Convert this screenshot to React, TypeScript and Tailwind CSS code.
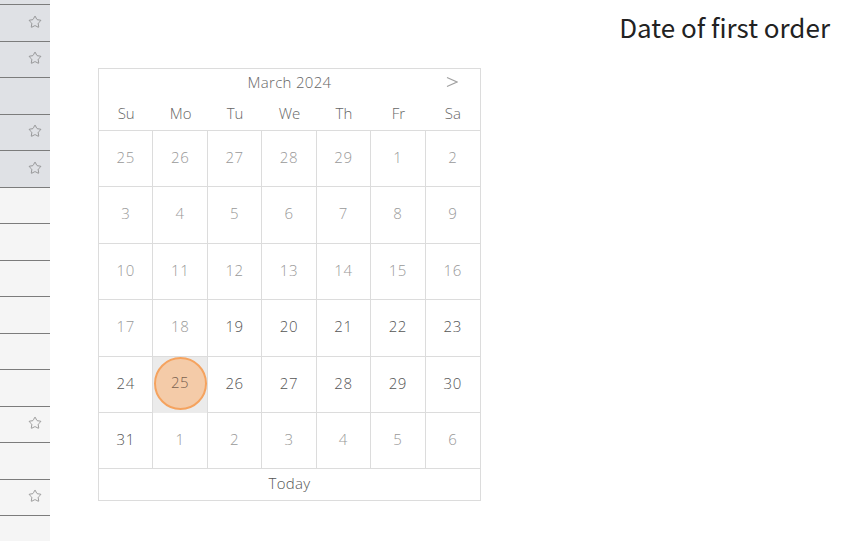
import { Star } from 'lucide-react';

const rows = [
  { bg: 'gray', star: false, h: 'h-[5px]' },
  { bg: 'gray', star: true },
  { bg: 'gray', star: true },
  { bg: 'gray', star: false },
  { bg: 'gray', star: true },
  { bg: 'gray', star: true },
  { bg: 'light', star: false },
  { bg: 'light', star: false },
  { bg: 'light', star: false },
  { bg: 'light', star: false },
  { bg: 'light', star: false },
  { bg: 'light', star: false },
  { bg: 'light', star: true },
  { bg: 'light', star: false },
  { bg: 'light', star: true },
  { bg: 'light', star: false, last: true },
];

const weekdays = ['Su', 'Mo', 'Tu', 'We', 'Th', 'Fr', 'Sa'];

// [day, active]
const weeks: [number, boolean][][] = [
  [[25, false], [26, false], [27, false], [28, false], [29, false], [1, false], [2, false]],
  [[3, false], [4, false], [5, false], [6, false], [7, false], [8, false], [9, false]],
  [[10, false], [11, false], [12, false], [13, false], [14, false], [15, false], [16, false]],
  [[17, false], [18, false], [19, true], [20, true], [21, true], [22, true], [23, true]],
  [[24, true], [25, true], [26, true], [27, true], [28, true], [29, true], [30, true]],
  [[31, true], [1, false], [2, false], [3, false], [4, false], [5, false], [6, false]],
];

function Sidebar() {
  return (
    <div className="w-[50px] shrink-0 bg-[#f5f5f5] min-h-[541px]">
      {rows.map((r, i) => (
        <div
          key={i}
          className={`${r.h ?? 'h-[36.5px]'} ${r.last ? '' : 'border-b border-[#7c7c7c]'} ${
            r.bg === 'gray' ? 'bg-[#dfe1e5]' : 'bg-[#f5f5f5]'
          } flex items-center justify-end pr-[8px] pb-[2px]`}
        >
          {r.star && <Star size={14} strokeWidth={1.2} className="text-[#777]" />}
        </div>
      ))}
    </div>
  );
}

function Calendar() {
  return (
    <div
      className="w-[383px] border border-[#dcdcdc] bg-white text-[15px] font-light"
      style={{ fontFamily: '"Open Sans", "Noto Sans", sans-serif' }}
    >
      <div className="h-[29px] relative flex items-center justify-center text-[#666] pb-[2px] tracking-[0.3px]">
        March 2024
        <svg
          className="absolute right-[22px] top-[7px]"
          width="12"
          height="12"
          viewBox="0 0 12 12"
          fill="none"
          stroke="#a0a0a0"
          strokeWidth="1.1"
        >
          <path d="M1 1.5 L11 6 L1 10.5" />
        </svg>
      </div>
      <div className="grid grid-cols-7 h-[33px] border-b border-[#dcdcdc] text-[#666] pb-[2px]">
        {weekdays.map((d) => (
          <div key={d} className="flex items-center justify-center">
            {d}
          </div>
        ))}
      </div>
      {weeks.map((w, wi) => (
        <div key={wi} className="grid grid-cols-7 h-[56.4px] border-b border-[#dcdcdc] tracking-[0.6px]">
          {w.map(([day, active], di) => {
            const selected = wi === 4 && di === 1;
            return (
              <div
                key={di}
                className={`flex items-center justify-center pb-[3px] ${di < 6 ? 'border-r border-[#dcdcdc]' : ''} ${
                  selected ? 'bg-[#ebebeb]' : ''
                } ${active ? 'text-[#555]' : 'text-[#999]'}`}
              >
                {selected ? (
                  <div className="w-[53px] h-[53px] rounded-full bg-[#f4cba8] border-2 border-[#f5a35f] flex items-center justify-center text-[#7a6250] pb-[1px]">
                    {day}
                  </div>
                ) : (
                  day
                )}
              </div>
            );
          })}
        </div>
      ))}
      <div className="h-[31px] flex items-center justify-center text-[#555] pb-[4px] tracking-[0.3px]">Today</div>
    </div>
  );
}

export default function App() {
  return (
    <div
      className="w-[860px] h-[541px] overflow-hidden bg-white flex"
      style={{ fontFamily: '"Noto Sans CJK JP", "Noto Sans", sans-serif' }}
    >
      <Sidebar />
      <div className="flex-1 flex justify-between">
        <div className="ml-[48px] mt-[68px]">
          <Calendar />
        </div>
        <h1 className="mr-[30px] mt-[9px] text-[26px] leading-[36px] text-[#222] font-normal">
          Date of first order
        </h1>
      </div>
    </div>
  );
}
